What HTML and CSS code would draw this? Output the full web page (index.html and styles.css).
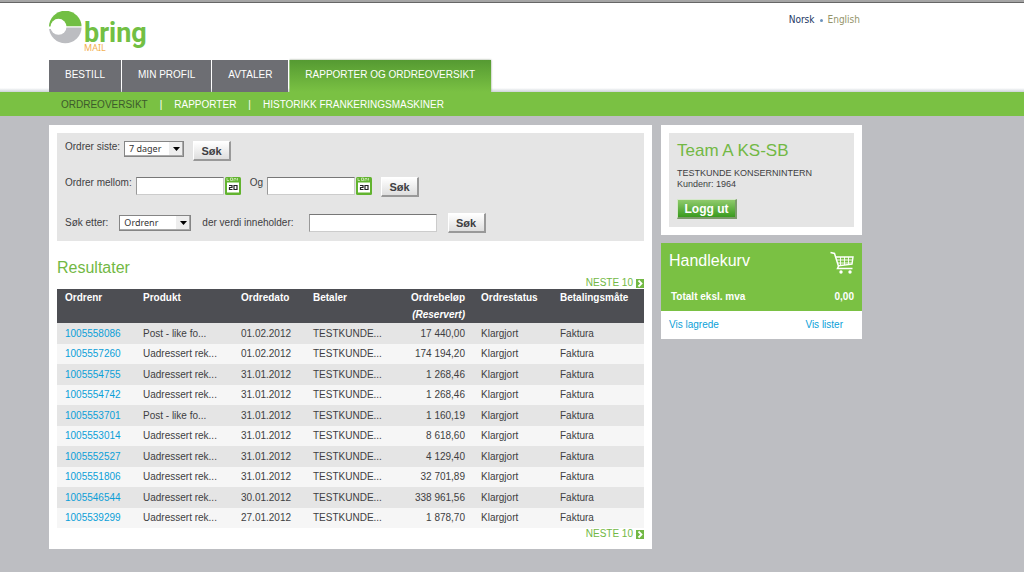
FILE: index.html
```html
<!DOCTYPE html>
<html lang="no">
<head>
<meta charset="utf-8">
<title>Bring Mail - Ordreoversikt</title>
<link rel="stylesheet" href="styles.css">
</head>
<body>
<header class="header">
  <div class="wrap">
    <div class="top">
      <a class="logo" href="#" aria-label="Bring Mail">
        <svg class="logo-mark" viewBox="0 0 34 34" aria-hidden="true">
          <path d="M0 16A16.300 16.300 0 0 1 32.600 16Z" fill="#72bf44"/>
          <path d="M0 16A16.300 16.300 0 0 0 32.600 16Z" fill="#bcbdc1"/>
          <circle cx="9.500" cy="15.800" r="8" fill="#fff"/>
          <path d="M0 15.500H3V18H0ZM15 15.200H33V16.500H15Z" fill="#fff"/>
        </svg>
        <span class="logo-text"><span class="logo-name">bring</span><span class="logo-sub">MAIL</span></span>
      </a>
      <div class="lang"><a class="lang-on" href="#">Norsk</a><span class="lang-dot"></span><a class="lang-off" href="#">English</a></div>
    </div>
    <nav class="tabs" aria-label="Hovedmeny">
      <a class="tab" href="#">BESTILL</a>
      <a class="tab" href="#">MIN PROFIL</a>
      <a class="tab" href="#">AVTALER</a>
      <a class="tab tab-active" href="#">RAPPORTER OG ORDREOVERSIKT</a>
    </nav>
  </div>
</header>
<div class="subbar">
  <nav class="subnav wrap" aria-label="Undermeny">
    <a class="subnav-on" href="#">ORDREOVERSIKT</a><span>|</span><a href="#">RAPPORTER</a><span>|</span><a href="#">HISTORIKK FRANKERINGSMASKINER</a>
  </nav>
</div>
<div class="page wrap">
  <main class="panel">
    <form class="filters">
      <div class="row">
        <div class="field">
          <label for="period">Ordrer siste:</label>
          <span class="pick"><select id="period" class="select select-s"><option>7 dager</option></select><svg class="arrow" viewBox="0 0 7 4" aria-hidden="true"><path d="M0 0H7L3.500 4Z"/></svg></span>
        </div>
        <button class="btn" type="button">Søk</button>
      </div>
      <div class="row">
        <div class="field">
          <label for="from">Ordrer mellom:</label>
          <span class="date"><input id="from" class="input" type="text">
            <svg class="cal" viewBox="0 0 16 18" aria-hidden="true"><rect width="16" height="18" rx="1.500" fill="#62b32f"/><path d="M2 1V3.500H4M5.500 1H7.500V3.500H5.500ZM9 4V1.500H11V3.500M12.500 1V3.500" stroke="#dff2d0" stroke-width="0.700" fill="none"/><rect x="2" y="5.500" width="12" height="10" fill="#fff"/><path d="M4 8.500H7V10.500H4.500V12.500H7.500M9 8.500H12V12.500H9Z" stroke="#222" stroke-width="1.200" fill="none"/></svg></span>
        </div>
        <div class="field">
          <label for="to">Og</label>
          <span class="date"><input id="to" class="input" type="text">
            <svg class="cal" viewBox="0 0 16 18" aria-hidden="true"><rect width="16" height="18" rx="1.500" fill="#62b32f"/><path d="M2 1V3.500H4M5.500 1H7.500V3.500H5.500ZM9 4V1.500H11V3.500M12.500 1V3.500" stroke="#dff2d0" stroke-width="0.700" fill="none"/><rect x="2" y="5.500" width="12" height="10" fill="#fff"/><path d="M4 8.500H7V10.500H4.500V12.500H7.500M9 8.500H12V12.500H9Z" stroke="#222" stroke-width="1.200" fill="none"/></svg></span>
        </div>
        <button class="btn" type="button">Søk</button>
      </div>
      <div class="row row-mid">
        <label for="kind">Søk etter:</label>
        <span class="pick"><select id="kind" class="select select-m"><option>Ordrenr</option></select><svg class="arrow" viewBox="0 0 7 4" aria-hidden="true"><path d="M0 0H7L3.500 4Z"/></svg></span>
        <label class="label-wide" for="value">der verdi inneholder:</label>
        <input id="value" class="input input-l" type="text">
        <button class="btn" type="button">Søk</button>
      </div>
    </form>
    <h1 class="title results-title">Resultater</h1>
    <a class="next" href="#">NESTE 10 <svg class="next-icon" viewBox="0 0 8 9" aria-hidden="true"><rect width="8" height="9" fill="#72b844"/><path d="M2.500 1.500L5.500 4.500L2.500 7.500" stroke="#fff" stroke-width="1.800" fill="none"/></svg></a>
    <table class="orders">
      <colgroup><col class="c-nr"><col class="c-product"><col class="c-date"><col class="c-payer"><col class="c-sum"><col class="c-status"><col class="c-pay"></colgroup>
      <thead><tr><th>Ordrenr</th><th>Produkt</th><th>Ordredato</th><th>Betaler</th><th class="num">Ordrebeløp<br><em>(Reservert)</em></th><th>Ordrestatus</th><th>Betalingsmåte</th></tr></thead>
      <tbody>
        <tr><td><a href="#">1005558086</a></td><td>Post - like fo...</td><td>01.02.2012</td><td>TESTKUNDE...</td><td class="num">17 440,00</td><td>Klargjort</td><td>Faktura</td></tr>
        <tr><td><a href="#">1005557260</a></td><td>Uadressert rek...</td><td>01.02.2012</td><td>TESTKUNDE...</td><td class="num">174 194,20</td><td>Klargjort</td><td>Faktura</td></tr>
        <tr><td><a href="#">1005554755</a></td><td>Uadressert rek...</td><td>31.01.2012</td><td>TESTKUNDE...</td><td class="num">1 268,46</td><td>Klargjort</td><td>Faktura</td></tr>
        <tr><td><a href="#">1005554742</a></td><td>Uadressert rek...</td><td>31.01.2012</td><td>TESTKUNDE...</td><td class="num">1 268,46</td><td>Klargjort</td><td>Faktura</td></tr>
        <tr><td><a href="#">1005553701</a></td><td>Post - like fo...</td><td>31.01.2012</td><td>TESTKUNDE...</td><td class="num">1 160,19</td><td>Klargjort</td><td>Faktura</td></tr>
        <tr><td><a href="#">1005553014</a></td><td>Uadressert rek...</td><td>31.01.2012</td><td>TESTKUNDE...</td><td class="num">8 618,60</td><td>Klargjort</td><td>Faktura</td></tr>
        <tr><td><a href="#">1005552527</a></td><td>Uadressert rek...</td><td>31.01.2012</td><td>TESTKUNDE...</td><td class="num">4 129,40</td><td>Klargjort</td><td>Faktura</td></tr>
        <tr><td><a href="#">1005551806</a></td><td>Uadressert rek...</td><td>31.01.2012</td><td>TESTKUNDE...</td><td class="num">32 701,89</td><td>Klargjort</td><td>Faktura</td></tr>
        <tr><td><a href="#">1005546544</a></td><td>Uadressert rek...</td><td>30.01.2012</td><td>TESTKUNDE...</td><td class="num">338 961,56</td><td>Klargjort</td><td>Faktura</td></tr>
        <tr><td><a href="#">1005539299</a></td><td>Uadressert rek...</td><td>27.01.2012</td><td>TESTKUNDE...</td><td class="num">1 878,70</td><td>Klargjort</td><td>Faktura</td></tr>
      </tbody>
    </table>
    <a class="next" href="#">NESTE 10 <svg class="next-icon" viewBox="0 0 8 9" aria-hidden="true"><rect width="8" height="9" fill="#72b844"/><path d="M2.500 1.500L5.500 4.500L2.500 7.500" stroke="#fff" stroke-width="1.800" fill="none"/></svg></a>
  </main>
  <aside class="side">
    <section class="account">
      <div class="account-box">
        <h2 class="title title-account">Team A KS-SB</h2>
        <p class="customer">TESTKUNDE KONSERNINTERN<br>Kundenr: 1964</p>
        <button class="logout" type="button">Logg ut</button>
      </div>
    </section>
    <section class="cart">
      <div class="cart-top">
        <div class="cart-head">
          <h2 class="title title-white">Handlekurv</h2>
          <svg class="cart-icon" viewBox="0 0 24 24" aria-hidden="true" fill="none" stroke="#fff"><path d="M0.500 1.500L4.500 2.500L8.500 15.200L7.500 17.500H22.500" stroke-width="1.500"/><path d="M5.500 6H23L22 13.200L8.500 14.800" stroke-width="1.400"/><path d="M6.500 9H22.500M7.500 12H22M10.500 6V14.500M14.500 6V14M18.500 6V13.500" stroke-width="0.900"/><circle cx="11" cy="21" r="1.700" fill="#fff" stroke="none"/><circle cx="20" cy="21" r="1.700" fill="#fff" stroke="none"/></svg>
        </div>
        <div class="cart-total"><span>Totalt eksl. mva</span><span>0,00</span></div>
      </div>
      <div class="cart-links"><a href="#">Vis lagrede</a><a href="#">Vis lister</a></div>
    </section>
  </aside>
</div>
</body>
</html>
```
FILE: styles.css
```css
* { box-sizing: border-box; }
body {
  margin: 0;
  min-height: 100vh;
  background: #bdbec2;
  color: #3e3e42;
  font: 10px/12px "Liberation Sans", Arial, sans-serif;
}
a { color: #0b9fd8; text-decoration: none; }
h1, h2, p { margin: 0; }
.wrap { max-width: 862px; padding-left: 49px; }

.header {
  background: linear-gradient(to top, #cdd3d8, #fff 4px);
  border-top: 2px solid #a5a5a5;
  box-shadow: inset 0 1px #666;
}
.top { display: flex; justify-content: space-between; align-items: flex-start; height: 58px; padding-top: 9px; }
.logo { display: flex; gap: 1px; }
.logo-mark { width: 34px; height: 34px; }
.logo-text { display: flex; flex-direction: column; color: #72bf44; }
.logo-name { height: 32px; padding-top: 8px; font: bold 27px/28px Roboto, "Liberation Sans", sans-serif; }
.logo-sub { color: #f3b04f; font: 9px/10px "Noto Sans", sans-serif; }
.lang { display: flex; align-items: center; gap: 5px; padding: 3px 2px 0 0; font: 10px/12px "DejaVu Sans Condensed", "DejaVu Sans", sans-serif; }
.lang-on { color: #1d3765; }
.lang-off { color: #94946a; }
.lang-dot { width: 3px; height: 3px; border-radius: 50%; background: #6b93bd; }

.tabs { display: flex; gap: 1px; }
.tab { padding: 9px 16px 11px; background: #6d6e73; color: #fff; }
.tab-active { background: linear-gradient(#559a32, #7ac143); box-shadow: 0 0 2px #8c9c84; clip-path: inset(-2px -3px 0 0); }
.subbar { background: #7ac143; }
.subnav { display: flex; gap: 12px; padding-top: 7px; padding-bottom: 5px; color: #fff; }
.subnav a { color: #fff; }
.subnav a:first-child { margin-left: 12px; }
.subnav .subnav-on { color: #3d5a2c; }

.page { display: grid; grid-template-columns: minmax(0, 1fr) 201px; gap: 9px; align-items: start; padding-top: 9px; padding-bottom: 22px; }
.panel { background: #fff; padding: 8px 8px 9px; }
.filters { display: grid; gap: 16px; padding: 8px; background: #e5e5e5; }
.row { display: flex; align-items: flex-start; gap: 9px; min-height: 20px; }
.row-mid { align-items: center; gap: 11px; }
.field { display: flex; gap: 4px; }
.label-wide { margin-right: 4px; }
.pick { position: relative; display: flex; }
.select {
  appearance: none;
  height: 16px;
  padding: 0 16px 0 4px;
  border: 1px solid #858585;
  border-radius: 0;
  box-shadow: inset -1px -1px #aaa;
  background: linear-gradient(#eee, #eee) right / 14px 100% no-repeat #fff;
  color: #333;
  font: 9px/14px "Noto Sans", sans-serif;
}
.select-s { width: 60px; }
.select-m { width: 72px; }
.arrow { position: absolute; right: 4px; top: 6px; width: 7px; height: 4px; pointer-events: none; }
.date { display: flex; gap: 1px; }
.input { width: 88px; height: 18px; padding: 0 3px; border: 1px solid #ccc; border-top-color: #777; border-left-color: #999; background: #fff; font: inherit; }
.input-l { width: 128px; }
.cal { width: 16px; height: 18px; }
.btn {
  width: 38px;
  height: 20px;
  padding: 0;
  border: 1px solid #fff;
  border-right: 2px solid #999;
  border-bottom: 2px solid #999;
  background: linear-gradient(#fff, #dedede);
  color: #3e3e42;
  font: bold 11px/16px "Liberation Sans", Arial, sans-serif;
}

.title { color: #72b844; font-size: 16px; font-weight: normal; line-height: 18px; }
.title-white { color: #fff; line-height: 19px; }
.title-account { font-size: 17px; line-height: 19px; }
.results-title { margin-top: 18px; }
.next { display: flex; align-items: center; justify-content: flex-end; gap: 3px; color: #72b844; }
.next-icon { width: 8px; height: 9px; }
.orders { width: 100%; table-layout: fixed; border-collapse: collapse; }
.c-nr { width: 78px; }
.c-product { width: 98px; }
.c-date { width: 72px; }
.c-payer { width: 92px; }
.c-sum { width: 76px; }
.c-status { width: 79px; }
.orders th { padding: 0 8px; background: #4d4e53; color: #fff; text-align: left; vertical-align: top; line-height: 17px; }
.orders td { padding: 0 8px; background: #e5e5e5; line-height: 21px; white-space: nowrap; }
.orders tr:nth-child(even) td { background: #f6f6f6; line-height: 20px; }
.orders .num { text-align: right; }

.side { display: grid; gap: 8px; }
.account { padding: 8px; background: #fff; }
.account-box { padding: 8px; background: #e5e5e5; }
.customer { margin: 8px 0 9px; font-size: 9px; line-height: 11px; }
.logout {
  display: block;
  width: 60px;
  height: 20px;
  padding: 0;
  border: 1px solid #d5e8ca;
  border-right: 2px solid #7c9b6b;
  border-bottom: 2px solid #7c9b6b;
  background: linear-gradient(#8fca6c, #399b1e);
  color: #fff;
  font: bold 12px/16px "Liberation Sans", Arial, sans-serif;
}
.cart { background: #fff; }
.cart-top { padding: 8px; background: #7ac143; color: #fff; }
.cart-head { display: flex; justify-content: space-between; }
.cart-icon { width: 24px; height: 24px; }
.cart-total { display: flex; justify-content: space-between; padding: 16px 0 0 2px; font-weight: bold; }
.cart-links { display: flex; justify-content: space-between; padding: 8px 19px 8px 8px; }
```
